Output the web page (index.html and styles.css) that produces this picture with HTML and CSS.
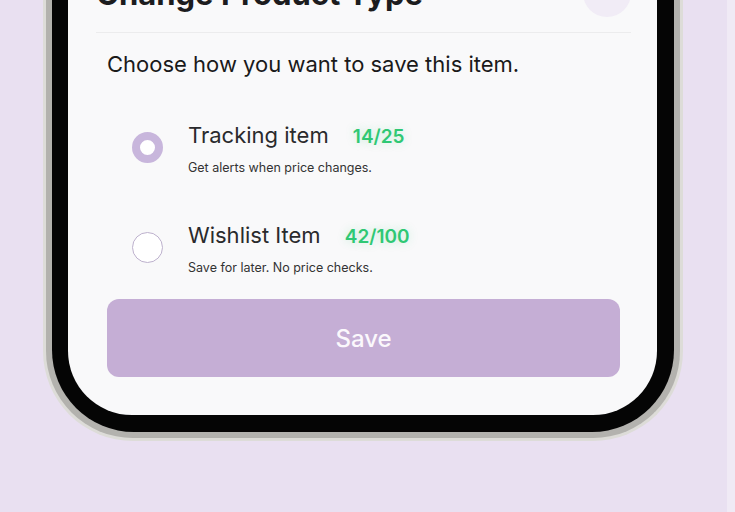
FILE: index.html
```html
<!DOCTYPE html>
<html lang="en">
<head>
    <meta charset="UTF-8">
    <meta name="viewport" content="width=device-width, initial-scale=1.0">
    <title>Change Product Type</title>
    <link rel="stylesheet" href="styles.css">
</head>
<body>
    <div class="phone">
        <div class="bezel">
            <div class="screen">
                <div class="sheet-head">
                    <h1>Change Product Type</h1>
                    <button type="button" class="close" aria-label="Close"></button>
                </div>
                <div class="sheet-body">
                    <p class="intro">Choose how you want to save this item.</p>
                    <div class="options">
                        <label class="option">
                            <span class="radio checked"></span>
                            <span class="option-text">
                                <span class="option-title">Tracking item <span class="count">14/25</span></span>
                                <span class="option-desc">Get alerts when price changes.</span>
                            </span>
                        </label>
                        <label class="option">
                            <span class="radio"></span>
                            <span class="option-text">
                                <span class="option-title">Wishlist Item <span class="count">42/100</span></span>
                                <span class="option-desc">Save for later. No price checks.</span>
                            </span>
                        </label>
                    </div>
                    <button type="button" class="save">Save</button>
                </div>
            </div>
        </div>
    </div>
</body>
</html>
```

FILE: styles.css
```css
body {
    margin: 0;
    height: 512px;
    overflow: hidden;
    font-family: Inter, "Noto Sans", sans-serif;
    background: linear-gradient(to right, #e9e0f1 727px, #f0eaf5 727px);
}
.phone {
    width: 640px;
    box-sizing: border-box;
    margin: -87px 0 0 43px;
    padding: 0 6px 6px 6px;
    background-color: #b3b2ae;
    border: 3px solid #dddcd8;
    border-top: none;
    border-radius: 0 0 90px 90px;
}
.bezel {
    background-color: #050505;
    padding: 96px 17px 17px 16px;
    border-radius: 0 0 82px 82px;
}
.screen {
    background-color: #f9f9fa;
    border-radius: 0 0 64px 64px;
    padding: 0 26px 38px 28px;
    margin-top: -40px;
}
.sheet-head {
    display: flex;
    align-items: center;
    justify-content: space-between;
    padding-bottom: 15px;
    border-bottom: 1px solid #ececed;
}
.sheet-head h1 {
    margin: 0;
    font-size: 31px;
    font-weight: 700;
    color: #1c1c1e;
}
.close {
    width: 48px;
    height: 48px;
    border: none;
    border-radius: 50%;
    background-color: #f1ecf6;
    padding: 0;
}
.sheet-body {
    padding: 0 11px;
}
.intro {
    margin: 17px 0 0 0;
    font-size: 22px;
    line-height: 28px;
    color: #1a1a1a;
}
.options {
    margin-top: 21px;
}
.option {
    display: flex;
    align-items: center;
    gap: 25px;
    padding: 22px 25px;
}
.radio {
    width: 31px;
    height: 31px;
    box-sizing: border-box;
    border-radius: 50%;
    border: 1.5px solid #bdb1cd;
    background-color: #ffffff;
    flex-shrink: 0;
    margin-bottom: 3px;
}
.radio.checked {
    border: 8px solid #c8b6dc;
}
.option-text {
    display: flex;
    flex-direction: column;
}
.option-title {
    font-size: 22px;
    line-height: 28px;
    color: #2a2a2c;
}
.count {
    margin-left: 18px;
    font-size: 19px;
    font-weight: 600;
    color: #2fc874;
    text-shadow: 0 0 10px rgba(47, 200, 116, 0.25);
}
.option-desc {
    margin-top: 8px;
    font-size: 12.5px;
    line-height: 18px;
    color: #333;
}
.save {
    display: block;
    width: 100%;
    height: 78px;
    margin-top: 0;
    border: none;
    border-radius: 12px;
    background-color: #c5aed5;
    color: #fbf8fc;
    font-family: Inter, "Noto Sans", sans-serif;
    font-size: 24px;
    font-weight: 500;
}
```
